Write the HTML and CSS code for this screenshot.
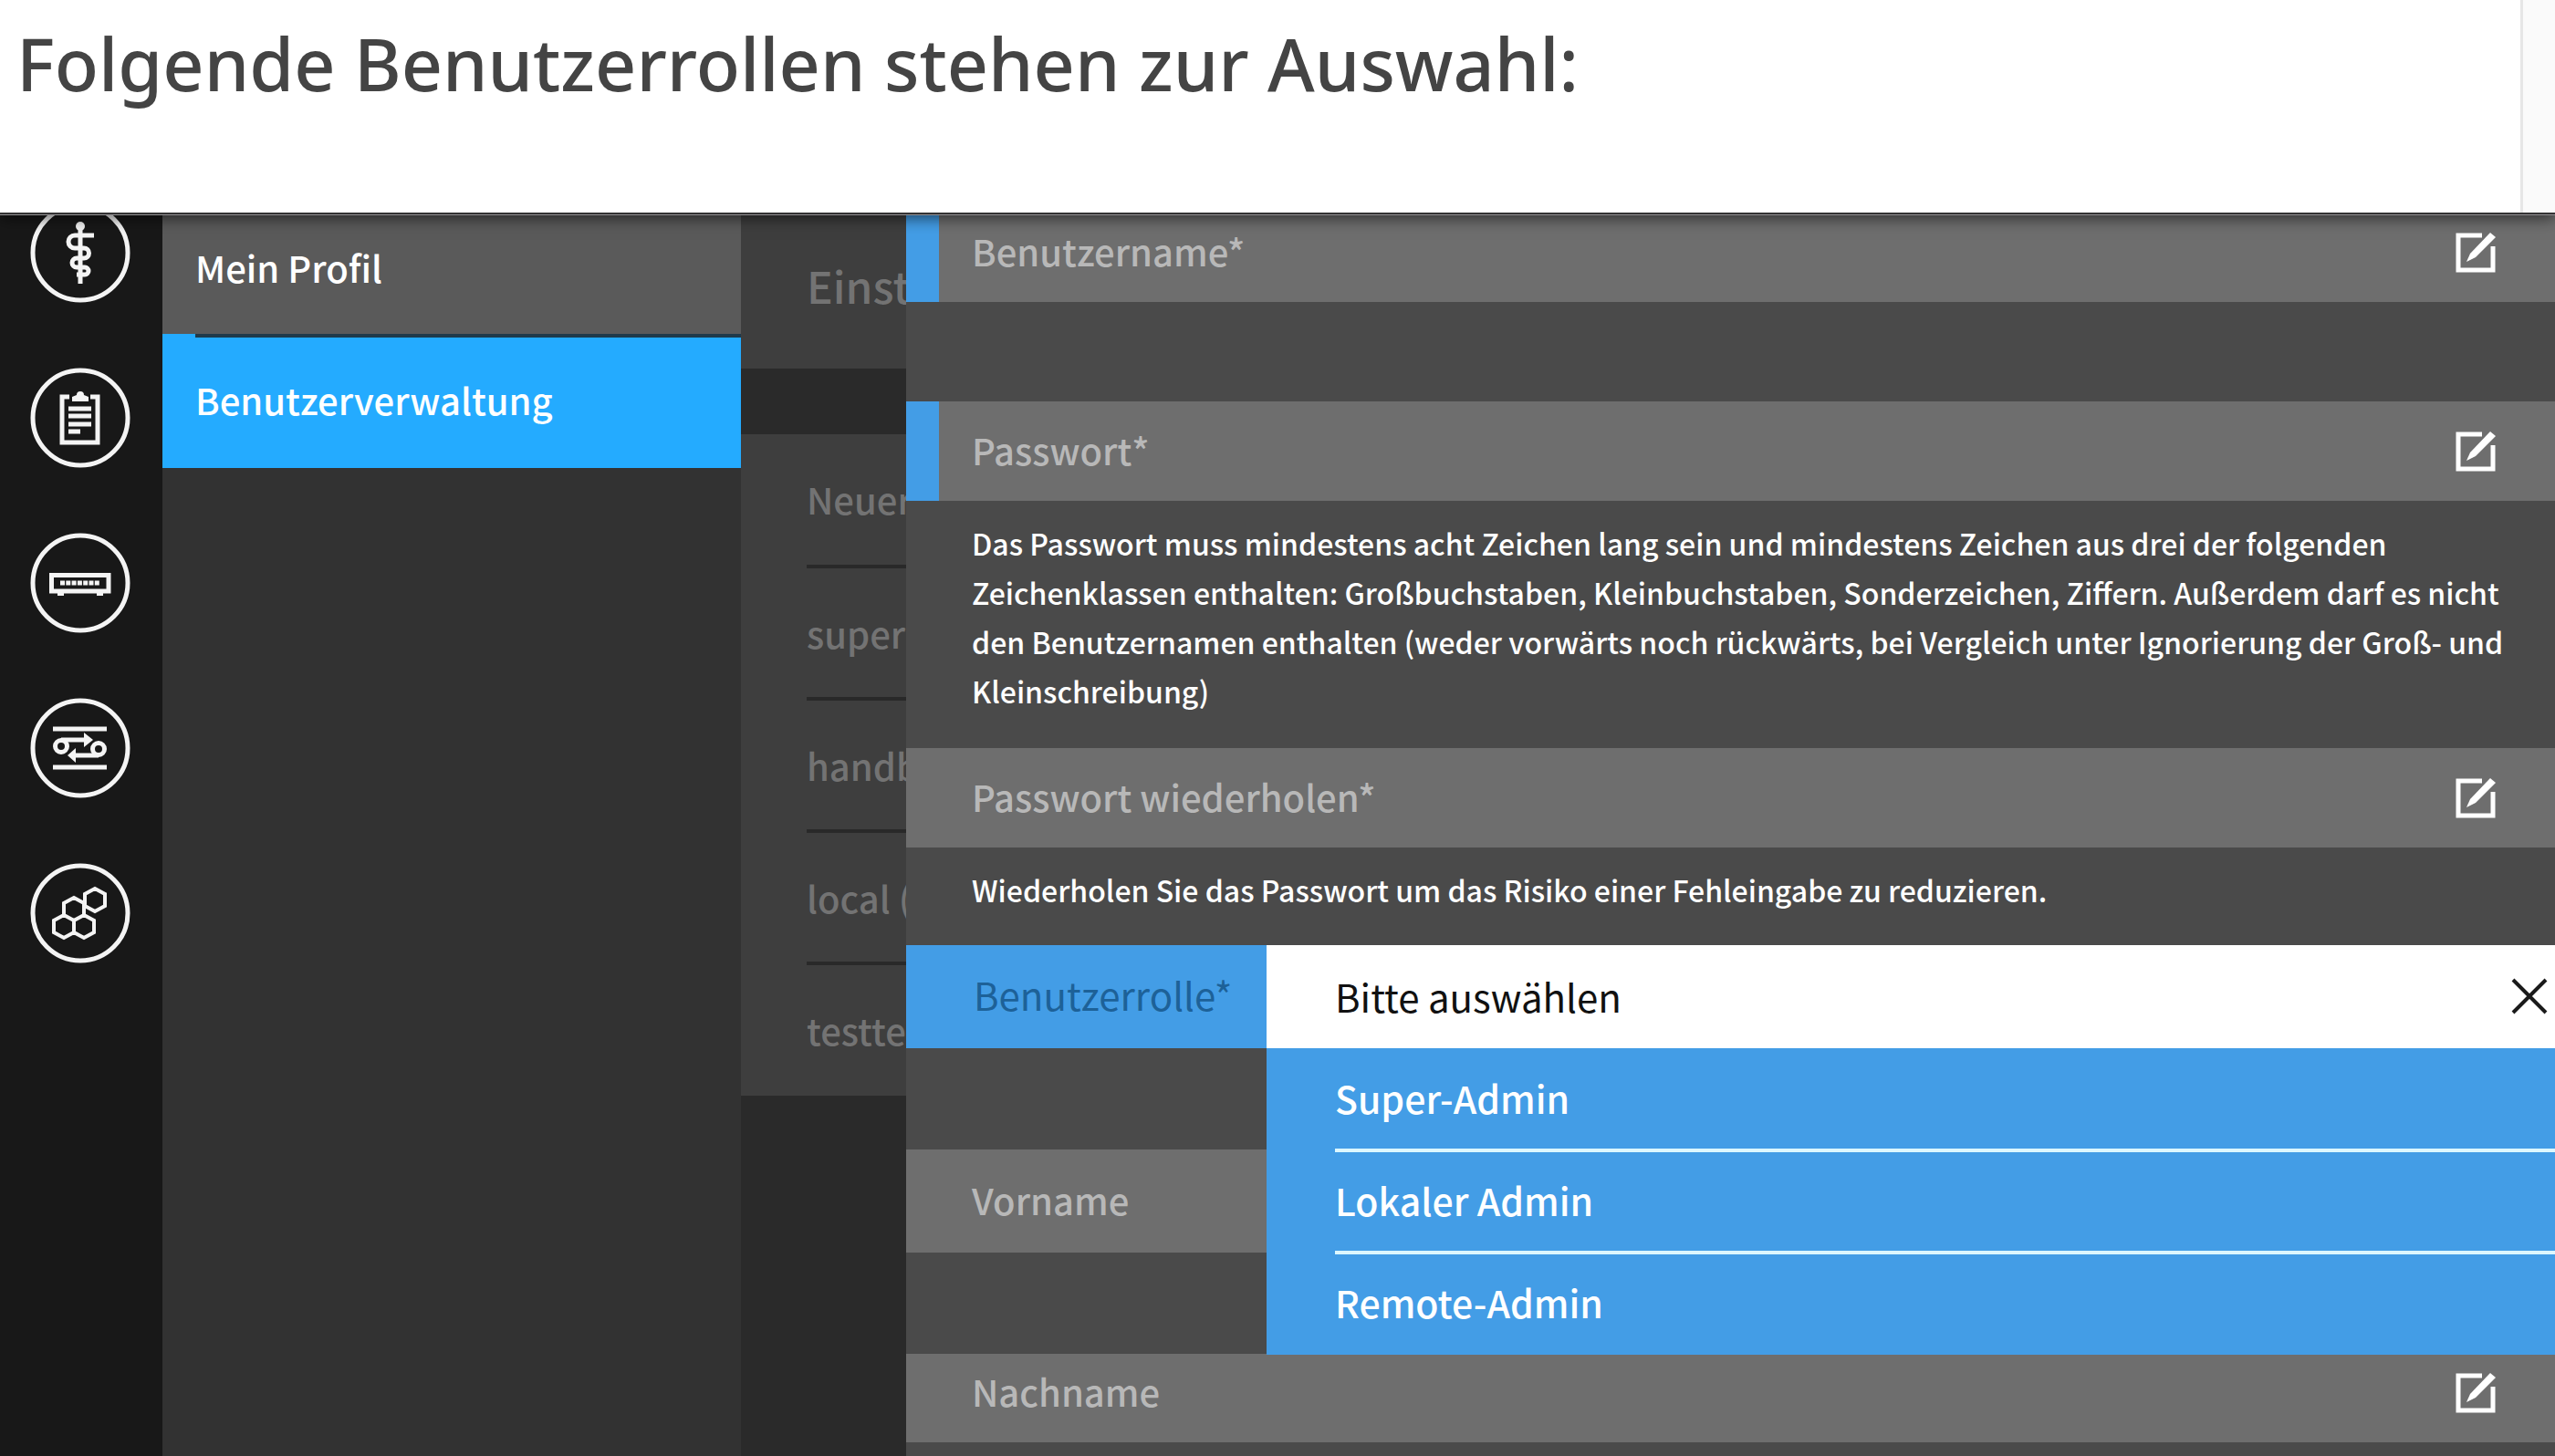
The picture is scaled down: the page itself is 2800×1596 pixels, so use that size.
FILE: index.html
```html
<!DOCTYPE html>
<html lang="de">
<head>
<meta charset="utf-8">
<meta name="viewport" content="width=device-width, initial-scale=1">
<title>Benutzerverwaltung</title>
<link rel="stylesheet" href="styles.css">
</head>
<body>
<svg class="sprite" aria-hidden="true">
  <symbol id="edit" viewBox="0 0 44 44">
    <path d="M29 3H3V41H41V15" fill="none" stroke="currentColor" stroke-width="5"/>
    <path d="M12 32L16 23L38 0L44 5L22 27Z" fill="currentColor"/>
  </symbol>
</svg>

<header class="intro">
  <h1 class="intro-title">Folgende Benutzerrollen stehen zur Auswahl:</h1>
  <div class="intro-edge"></div>
</header>

<div class="app">
  <nav class="rail" aria-label="Bereiche">
    <a class="rail-link" href="#praxis" aria-label="Praxis">
      <svg class="rail-icon" viewBox="0 0 110 110">
        <circle cx="55" cy="55" r="52"/>
        <path d="M55 26V89M70 36H49a7 7 0 0 0 0 14H59a5 5 0 0 1 0 11H51a5 5 0 0 0 0 10H60a4 4 0 0 1 0 8H51"/>
        <circle class="solid" cx="55" cy="26" r="5"/>
      </svg>
    </a>
    <a class="rail-link" href="#protokoll" aria-label="Protokoll">
      <svg class="rail-icon" viewBox="0 0 110 110">
        <circle cx="55" cy="55" r="52"/>
        <path d="M43 32H35V82H74V32H66M42 45H67M42 53H67M42 62H67M42 70H55"/>
        <path class="solid" d="M46 37V32L51 30A4 4 0 0 1 59 30L64 32V37Z"/>
      </svg>
    </a>
    <a class="rail-link" href="#geraete" aria-label="Geräte">
      <svg class="rail-icon" viewBox="0 0 110 110">
        <circle cx="55" cy="55" r="52"/>
        <path d="M23.500 46.500H86V64H23.500Z"/>
        <path class="solid" d="M30 66H37V69H30ZM73 66H80V69H73Z"/>
        <path stroke-dasharray="5 1.300" d="M33 55H77"/>
      </svg>
    </a>
    <a class="rail-link" href="#verbindungen" aria-label="Verbindungen">
      <svg class="rail-icon" viewBox="0 0 110 110">
        <circle cx="55" cy="55" r="52"/>
        <path d="M25 34H84M25 76H84M34 46H61M75 63H48"/>
        <circle cx="34" cy="53" r="6.500"/>
        <circle cx="75" cy="56" r="6.500"/>
        <path class="solid" d="M59 38L69 46L59 54ZM50 55L41 63L50 71Z"/>
      </svg>
    </a>
    <a class="rail-link" href="#netzwerk" aria-label="Netzwerk">
      <svg class="rail-icon" viewBox="0 0 110 110">
        <circle cx="55" cy="55" r="52"/>
        <path class="hex" d="M71 28L82 34V47L71 53L60 47V34ZM48 38L59 44V57L48 63L37 57V44ZM37 57L48 63V76L37 82L26 76V63ZM59 57L70 63V76L59 82L48 76V63Z"/>
      </svg>
    </a>
  </nav>

  <nav class="menu" aria-label="Menü">
    <a class="menu-item" href="#profil">Mein Profil</a>
    <a class="menu-item is-active" href="#benutzer" aria-current="page">Benutzerverwaltung</a>
  </nav>

  <section class="users">
    <h2 class="users-title">Einst</h2>
    <ul class="users-list">
      <li>Neuer</li>
      <li>super</li>
      <li>handb</li>
      <li>local (</li>
      <li>testte</li>
    </ul>
  </section>

  <form class="panel">
    <div class="field is-required is-first">
      <label class="field-label" for="user">Benutzername*</label>
      <input class="field-input" id="user" type="text">
      <button class="edit" type="button" aria-label="Benutzername bearbeiten"><svg><use href="#edit"/></svg></button>
    </div>
    <div class="gap is-narrow"></div>
    <div class="field is-required">
      <label class="field-label" for="pass">Passwort*</label>
      <input class="field-input" id="pass" type="password">
      <button class="edit" type="button" aria-label="Passwort bearbeiten"><svg><use href="#edit"/></svg></button>
    </div>
    <p class="hint">Das Passwort muss mindestens acht Zeichen lang sein und mindestens Zeichen aus drei der folgenden Zeichenklassen enthalten: Großbuchstaben, Kleinbuchstaben, Sonderzeichen, Ziffern. Außerdem darf es nicht den Benutzernamen enthalten (weder vorwärts noch rückwärts, bei Vergleich unter Ignorierung der Groß- und Kleinschreibung)</p>
    <div class="field">
      <label class="field-label" for="repeat">Passwort wiederholen*</label>
      <input class="field-input" id="repeat" type="password">
      <button class="edit" type="button" aria-label="Passwort wiederholen bearbeiten"><svg><use href="#edit"/></svg></button>
    </div>
    <p class="hint">Wiederholen Sie das Passwort um das Risiko einer Fehleingabe zu reduzieren.</p>
    <div class="role">
      <label class="role-label" for="role">Benutzerrolle*</label>
      <div class="role-box">
        <select class="role-select" id="role"><option>Bitte auswählen</option></select>
        <button class="close" type="button" aria-label="Schließen">
          <svg viewBox="0 0 40 40"><path d="M2 2L38 38M38 2L2 38"/></svg>
        </button>
        <ul class="role-options">
          <li><button class="role-option" type="button">Super-Admin</button></li>
          <li><button class="role-option" type="button">Lokaler Admin</button></li>
          <li><button class="role-option" type="button">Remote-Admin</button></li>
        </ul>
      </div>
    </div>
    <div class="gap"></div>
    <div class="field is-tall">
      <label class="field-label" for="first">Vorname</label>
      <input class="field-input" id="first" type="text">
    </div>
    <div class="gap"></div>
    <div class="field is-last">
      <label class="field-label" for="last">Nachname</label>
      <input class="field-input" id="last" type="text">
      <button class="edit" type="button" aria-label="Nachname bearbeiten"><svg><use href="#edit"/></svg></button>
    </div>
  </form>
</div>
</body>
</html>
```
FILE: styles.css
```css
* { box-sizing: border-box; }

body {
  margin: 0;
  height: 100vh;
  display: flex;
  flex-direction: column;
  overflow: hidden;
  background: #4a4a4a;
  color: #fff;
  font-family: "Noto Sans CJK SC", "Noto Sans", sans-serif;
  font-size: 40px;
  line-height: 60px;
  font-weight: 500;
}

h1, h2, p, ul { margin: 0; padding: 0; font-weight: inherit; }
ul { list-style: none; }
a { color: inherit; text-decoration: none; }
button, input, select {
  font: inherit;
  color: inherit;
  background: none;
  border: 0;
  padding: 0;
  margin: 0;
  border-radius: 0;
}
svg { display: block; }
.sprite { position: absolute; width: 0; height: 0; }

/* Heading strip */
.intro {
  position: relative;
  z-index: 2;
  flex: none;
  display: flex;
  justify-content: space-between;
  min-height: 235px;
  background: #fff;
  border-bottom: 2px solid #343334;
  box-shadow: 0 1px 0 #918f91, 0 4px 16px rgba(0, 0, 0, .6);
}
.intro-title {
  padding: 18px 0 0 18px;
  font-family: "Noto Sans", "Open Sans", sans-serif;
  font-size: 79px;
  line-height: 104px;
  font-weight: 500;
  color: #444;
}
.intro-edge {
  width: 38px;
  border-left: 3px solid #e6e6e6;
  background: #fafafa;
}

.app {
  flex: 1;
  min-height: 0;
  display: grid;
  grid-template-columns: 178px 634px 181px minmax(0, 1fr);
}
.app > * { min-height: 0; overflow: hidden; }

/* Icon rail */
.rail {
  display: flex;
  flex-direction: column;
  align-items: center;
  gap: 71px;
  padding-right: 2px;
  background: #181818;
}
.rail-link { flex: none; }
.rail-link:first-child { margin-top: -13px; }
.rail-icon {
  width: 110px;
  height: 110px;
  fill: none;
  stroke: #f4f4f4;
  stroke-width: 5;
}
.rail-icon .solid { fill: #f4f4f4; stroke: none; }
.rail-icon .hex { stroke-width: 4; }

/* Menu */
.menu { background: #323232; }
.menu-item {
  display: block;
  height: 147px;
  padding: 42px 36px;
  background: #5a5a5a;
}
.menu-item:first-child { height: 131px; padding-top: 28px; }
.menu-item.is-active {
  background: linear-gradient(#1f3a4a, #1f3a4a) 36px 0 / 100% 4px no-repeat #24abff;
}

/* User list, dimmed behind the panel */
.users { background: #2a2a2a; color: #737373; white-space: nowrap; }
.users-title {
  height: 169px;
  padding: 47px 0 0 72px;
  background: #3e3e3e;
  font-size: 48px;
}
.users-list {
  margin-top: 72px;
  padding-left: 72px;
  background: #3e3e3e;
}
.users-list li {
  height: 145px;
  padding-top: 41px;
  border-bottom: 4px solid #292929;
}
.users-list li:first-child { height: 147px; }
.users-list li:last-child { height: 143px; border-bottom: 0; }

/* Form panel */
.panel { background: #4a4a4a; }
.field {
  display: flex;
  align-items: center;
  height: 109px;
  padding: 0 65px 0 72px;
  background: #6e6e6e;
  color: #b8b8b8;
}
.field.is-required { border-left: 36px solid #439de6; padding-left: 36px; }
.field.is-first { height: 96px; padding-bottom: 13px; }
.field.is-tall { height: 113px; }
.field.is-last { height: 97px; padding-bottom: 12px; }
.field-label { padding-bottom: 4px; }
.field-input { flex: 1; min-width: 0; outline: 0; padding-left: 24px; }
.edit { width: 44px; height: 44px; color: #fff; }
.edit svg { width: 44px; height: 44px; }
.gap { height: 111px; }
.gap.is-narrow { height: 109px; }
.hint {
  padding: 19px 40px 36px 72px;
  font-size: 32px;
  line-height: 54px;
}
.hint:has(+ .role) { padding-bottom: 34px; }

/* Role drop-down */
.role { display: flex; height: 113px; }
.role-label {
  width: 395px;
  padding: 24px 0 0 74px;
  background: #439de6;
  color: #1d6198;
  font-size: 42px;
  font-weight: 400;
}
.role-box {
  position: relative;
  flex: 1;
  display: flex;
  align-items: center;
  justify-content: space-between;
  padding: 0 8px 2px 75px;
  background: #fff;
  color: #111;
}
.role-select {
  appearance: none;
  flex: 1;
  height: 60px;
  padding-bottom: 4px;
  font-size: 42px;
  font-weight: 400;
}
.close { width: 40px; height: 40px; }
.close svg { width: 40px; height: 40px; stroke: #1a1a1a; stroke-width: 4; fill: none; }
.role-options {
  position: absolute;
  top: 100%;
  left: 0;
  right: 0;
  padding: 2px 0 2px 75px;
  background: #439de6;
  color: #fff;
  font-size: 41px;
}
.role-options li { height: 108px; }
.role-options li + li { height: 112px; border-top: 4px solid #dcf7ff; }
.role-option { display: block; width: 100%; height: 104px; text-align: left; }
```
